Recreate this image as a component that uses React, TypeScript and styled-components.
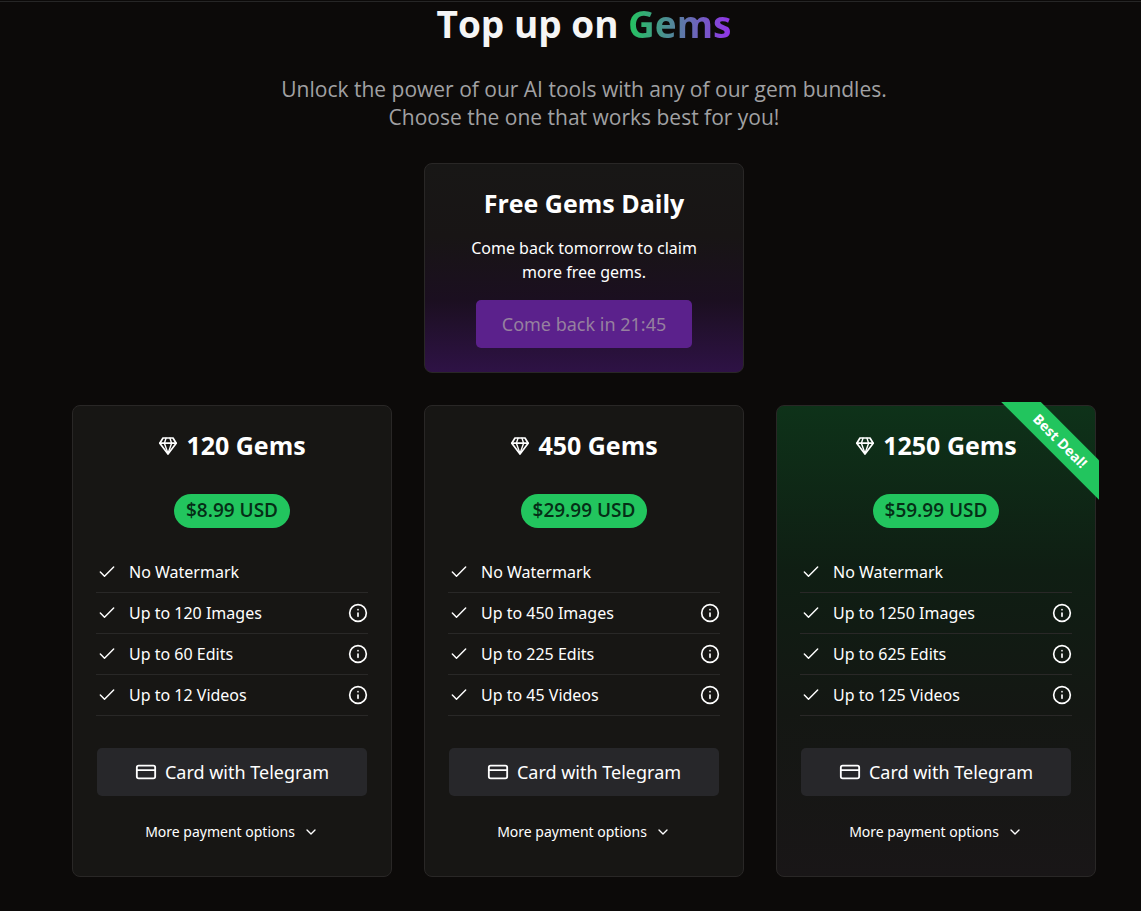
import styled, { createGlobalStyle } from "styled-components";
import { Check, ChevronDown, CreditCard, Info } from "lucide-react";

const displayFont = `"Open Sans", "Noto Sans", sans-serif`;

const GlobalStyle = createGlobalStyle`
  *, *::before, *::after { box-sizing: border-box; }
  body {
    margin: 0;
    background: #0c0a09;
    color: #ffffff;
    font-family: "Noto Sans", "Open Sans", sans-serif;
    font-size: 16px;
    line-height: 24px;
  }
  h1, h2, p, ul { margin: 0; padding: 0; }
  button { font-family: inherit; color: inherit; border: 0; cursor: pointer; }
`;

const Page = styled.main`
  min-height: 100vh;
  border-top: 1px solid #262626;
  margin-top: 1px;
  padding: 0 16px 32px 43px;
`;

const Content = styled.div`
  max-width: 1024px;
  margin: 0 auto;
  display: flex;
  flex-direction: column;
  align-items: center;
`;

const Title = styled.h1`
  font-family: ${displayFont};
  font-size: 37px;
  line-height: 44px;
  font-weight: 700;
  color: #f5f5f5;
`;

const Accent = styled.span`
  background: linear-gradient(to right, #22c55e, #9333ea);
  background-clip: text;
  -webkit-background-clip: text;
  color: transparent;
`;

const Subtitle = styled.p`
  margin-top: 29px;
  max-width: 640px;
  font-family: ${displayFont};
  font-size: 21px;
  line-height: 28px;
  text-align: center;
  color: #a1a1a3;
`;

const Card = styled.section<{ $tone?: "free" | "best" }>`
  position: relative;
  display: flex;
  flex-direction: column;
  align-items: center;
  padding: 24px;
  border: 1px solid #292726;
  border-radius: 8px;
  background: ${({ $tone }) =>
    $tone === "free"
      ? "linear-gradient(to bottom, #181716 0%, #181515 35%, #1b0f20 65%, #2e1245 100%)"
      : $tone === "best"
        ? "linear-gradient(to bottom, #0e3219 0%, #0f1e13 35%, #141713 65%, #191617 100%)"
        : "#171614"};
`;

const FreeCard = styled(Card)`
  width: 100%;
  max-width: 320px;
  margin: 32px 0;
`;

const CardTitle = styled.h2`
  display: flex;
  align-items: center;
  gap: 8px;
  font-family: ${displayFont};
  font-size: 25px;
  line-height: 30px;
  font-weight: 700;
`;

const FreeText = styled.p`
  max-width: 250px;
  margin: 18px 0 16px;
  text-align: center;
`;

const Action = styled.button<{ $claim?: boolean }>`
  display: flex;
  align-items: center;
  justify-content: center;
  gap: 8px;
  width: ${({ $claim }) => ($claim ? "auto" : "100%")};
  height: 48px;
  padding: 0 26px;
  border-radius: 5px;
  font-size: 18px;
  line-height: 28px;
  background: ${({ $claim }) => ($claim ? "#5b218c" : "#27272a")};
  && {
    color: ${({ $claim }) => ($claim ? "#96809f" : "#ffffff")};
  }
`;

const Plans = styled.div`
  width: 100%;
  display: grid;
  grid-template-columns: repeat(auto-fit, minmax(280px, 1fr));
  gap: 32px;
`;

const Price = styled.p`
  margin: 34px 0 24px;
  padding: 2px 12px 4px;
  border-radius: 17px;
  background: #22c55e;
  color: #052e16;
  font-family: ${displayFont};
  font-size: 19px;
  line-height: 28px;
  font-weight: 600;
`;

const Features = styled.ul`
  align-self: stretch;
  margin: 0 -1px 32px;
  list-style: none;
`;

const Feature = styled.li`
  display: flex;
  align-items: center;
  gap: 12px;
  height: 41px;
  padding-left: 1px;
  border-bottom: 1px solid #292827;
`;

const InfoButton = styled.button`
  display: flex;
  margin-left: auto;
  padding: 0;
  background: none;
`;

const MoreButton = styled.button`
  display: flex;
  align-items: center;
  gap: 8px;
  height: 40px;
  margin-top: 16px;
  padding: 0 16px;
  background: none;
  font-size: 14px;
  line-height: 20px;
`;

const RibbonClip = styled.div`
  position: absolute;
  top: -4px;
  right: -4px;
  width: 98px;
  height: 98px;
  overflow: hidden;
`;

const Ribbon = styled.span`
  position: absolute;
  top: 25px;
  right: -31px;
  width: 140px;
  padding: 4px 0;
  transform: rotate(45deg);
  background: #22c55e;
  font-size: 14px;
  line-height: 20px;
  font-weight: 700;
  text-align: center;
`;

function DiamondIcon() {
  return (
    <svg
      width="20"
      height="20"
      viewBox="0 -1 20 20"
      fill="none"
      stroke="currentColor"
      strokeWidth="1.7"
      strokeLinecap="round"
      strokeLinejoin="round"
      aria-hidden
    >
      <path d="M5 2h10l3.2 5.2L10 18 1.8 7.2z" />
      <path d="M2 7.2h16" />
      <path d="M8 2.2 6.4 7.2 10 17.6l3.6-10.4L12 2.2" strokeWidth="1.4" />
    </svg>
  );
}

type Plan = { gems: number; price: string; edits: number; videos: number; best?: boolean };

const plans: Plan[] = [
  { gems: 120, price: "$8.99 USD", edits: 60, videos: 12 },
  { gems: 450, price: "$29.99 USD", edits: 225, videos: 45 },
  { gems: 1250, price: "$59.99 USD", edits: 625, videos: 125, best: true },
];

function PlanCard({ gems, price, edits, videos, best }: Plan) {
  const limits = [`Up to ${gems} Images`, `Up to ${edits} Edits`, `Up to ${videos} Videos`];
  return (
    <Card $tone={best ? "best" : undefined}>
      {best && (
        <RibbonClip>
          <Ribbon>Best Deal!</Ribbon>
        </RibbonClip>
      )}
      <CardTitle>
        <DiamondIcon />
        {gems} Gems
      </CardTitle>
      <Price>{price}</Price>
      <Features>
        <Feature>
          <Check size={20} strokeWidth={1.75} aria-hidden />
          No Watermark
        </Feature>
        {limits.map((limit) => (
          <Feature key={limit}>
            <Check size={20} strokeWidth={1.75} aria-hidden />
            {limit}
            <InfoButton type="button" aria-label={`About: ${limit}`}>
              <Info size={20} />
            </InfoButton>
          </Feature>
        ))}
      </Features>
      <Action type="button">
        <CreditCard size={22} aria-hidden />
        Card with Telegram
      </Action>
      <MoreButton type="button">
        More payment options
        <ChevronDown size={16} aria-hidden />
      </MoreButton>
    </Card>
  );
}

export default function App() {
  return (
    <>
      <GlobalStyle />
      <Page>
        <Content>
          <Title>
            Top up on <Accent>Gems</Accent>
          </Title>
          <Subtitle>
            Unlock the power of our AI tools with any of our gem bundles. Choose the one that works best for you!
          </Subtitle>
          <FreeCard $tone="free">
            <CardTitle>Free Gems Daily</CardTitle>
            <FreeText>Come back tomorrow to claim more free gems.</FreeText>
            <Action type="button" $claim disabled>
              Come back in 21:45
            </Action>
          </FreeCard>
          <Plans>
            {plans.map((plan) => (
              <PlanCard key={plan.gems} {...plan} />
            ))}
          </Plans>
        </Content>
      </Page>
    </>
  );
}
